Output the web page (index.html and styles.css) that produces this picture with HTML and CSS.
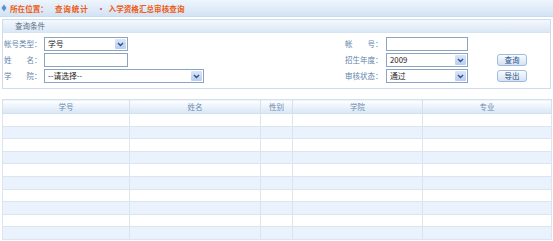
FILE: index.html
```html
<!DOCTYPE html>
<html>
<head>
<meta charset="utf-8">
<link rel="stylesheet" href="styles.css">
</head>
<body>
<div class="topbar">
  <svg class="pin" width="6" height="8" viewBox="0 0 6 8"><path d="M3 0.5 L5.5 4 L3 7.5 L0.5 4 Z" fill="#5b8fd0"/></svg>
  <span class="crumb">所在位置：</span>
  <span class="crumb sp">查询统计</span>
  <span class="dot">•</span>
  <span class="crumb">入学资格汇总审核查询</span>
</div>

<div class="panel">
  <div class="panel-head">查询条件</div>
  <div class="form">
    <div class="lbl r1 c1">帐号类型：</div>
    <div class="sel w84 r1 c2"><span>学号</span><i class="arr"><svg width="7" height="5" viewBox="0 0 7 5"><path d="M1 1 L3.5 3.5 L6 1" fill="none" stroke="#2f4f8f" stroke-width="1.4"/></svg></i></div>
    <div class="lbl r2 c1">姓　　名：</div>
    <div class="inp w84 r2 c2"></div>
    <div class="lbl r3 c1">学　　院：</div>
    <div class="sel w160 r3 c2"><span>--请选择--</span><i class="arr"><svg width="7" height="5" viewBox="0 0 7 5"><path d="M1 1 L3.5 3.5 L6 1" fill="none" stroke="#2f4f8f" stroke-width="1.4"/></svg></i></div>

    <div class="lbl r1 c4">帐　　号：</div>
    <div class="inp w82 r1 c5"></div>
    <div class="lbl r2 c4">招生年度：</div>
    <div class="sel w82 r2 c5"><span>2009</span><i class="arr"><svg width="7" height="5" viewBox="0 0 7 5"><path d="M1 1 L3.5 3.5 L6 1" fill="none" stroke="#2f4f8f" stroke-width="1.4"/></svg></i></div>
    <div class="lbl r3 c4">审核状态：</div>
    <div class="sel w82 r3 c5"><span>通过</span><i class="arr"><svg width="7" height="5" viewBox="0 0 7 5"><path d="M1 1 L3.5 3.5 L6 1" fill="none" stroke="#2f4f8f" stroke-width="1.4"/></svg></i></div>

    <div class="btn r2 c7">查询</div>
    <div class="btn r3 c7">导出</div>
  </div>
</div>

<table class="grid">
  <thead>
    <tr><th class="k1">学号</th><th class="k2">姓名</th><th class="k3">性别</th><th class="k4">学院</th><th class="k5">专业</th></tr>
  </thead>
  <tbody>
    <tr><td></td><td></td><td></td><td></td><td></td></tr>
    <tr class="alt"><td></td><td></td><td></td><td></td><td></td></tr>
    <tr><td></td><td></td><td></td><td></td><td></td></tr>
    <tr class="alt"><td></td><td></td><td></td><td></td><td></td></tr>
    <tr><td></td><td></td><td></td><td></td><td></td></tr>
    <tr class="alt"><td></td><td></td><td></td><td></td><td></td></tr>
    <tr><td></td><td></td><td></td><td></td><td></td></tr>
    <tr class="alt"><td></td><td></td><td></td><td></td><td></td></tr>
    <tr><td></td><td></td><td></td><td></td><td></td></tr>
    <tr class="alt"><td></td><td></td><td></td><td></td><td></td></tr>
  </tbody>
</table>
</body>
</html>
```

FILE: styles.css
```css
html, body {
  margin: 0;
  padding: 0;
  background: #ffffff;
  font-family: "Noto Sans CJK SC", "Noto Sans", sans-serif;
  font-size: 7.5px;
  overflow: hidden;
}

.topbar {
  height: 17px;
  display: flex;
  align-items: center;
  background: linear-gradient(#eef5fc, #d3e3f4);
  border-bottom: 1px solid #c9dbef;
  padding-left: 1px;
  box-sizing: border-box;
}
.pin { margin-right: 3px; }
.crumb {
  color: #ee5a12;
  font-weight: bold;
  font-size: 7.6px;
}
.crumb.sp { margin-left: 7px; letter-spacing: 0.8px; }
.dot {
  color: #e8407a;
  font-size: 9px;
  margin: 0 3px 0 8px;
}

.panel {
  margin: 2px 2px 0 2px;
  border: 1px solid #cddcee;
  height: 70px;
  box-sizing: border-box;
}
.panel-head {
  height: 12px;
  line-height: 12px;
  padding-left: 12px;
  color: #5c6f86;
  background: linear-gradient(#f4f8fd, #dbe7f5);
  border-bottom: 1px solid #d6e3f1;
}

.form {
  display: grid;
  grid-template-columns: 40px 160px 141px 41px 82px 29px 30px;
  grid-template-rows: 14px 14px 14px;
  row-gap: 2px;
  padding: 4px 0 0 1px;
}
.r1 { grid-row: 1; }
.r2 { grid-row: 2; }
.r3 { grid-row: 3; }
.c1 { grid-column: 1; }
.c2 { grid-column: 2; }
.c4 { grid-column: 4; }
.c5 { grid-column: 5; }
.c7 { grid-column: 7; }

.lbl {
  color: #6284ab;
  line-height: 14px;
  white-space: nowrap;
}

.inp, .sel {
  height: 14px;
  box-sizing: border-box;
  border: 1px solid #8aa4c2;
  background: #fff;
  position: relative;
}
.w84 { width: 84px; }
.w82 { width: 82px; }
.w160 { width: 160px; }

.sel span {
  display: block;
  padding-left: 3px;
  line-height: 12px;
  color: #1d1d1d;
  font-size: 7.8px;
}
.sel .arr {
  position: absolute;
  right: 1px;
  top: 1px;
  width: 11px;
  height: 10px;
  background: linear-gradient(#d9e6f8, #b8cdee);
  border-radius: 1px;
  display: flex;
  align-items: center;
  justify-content: center;
}

.btn {
  height: 12px;
  margin-top: 1px;
  box-sizing: border-box;
  border: 1px solid #9fbadb;
  border-radius: 3px;
  background: linear-gradient(#fafcff, #d3e2f4);
  color: #2a4e86;
  text-align: center;
  line-height: 10px;
}

.grid {
  margin: 10px 2px 0 2px;
  width: 549px;
  border-collapse: collapse;
  table-layout: fixed;
}
.grid th {
  height: 14px;
  padding: 0;
  font-weight: normal;
  color: #6b8bb0;
  background: linear-gradient(#ffffff, #d7e6f6);
  border: 1px solid #d3e0ee;
  text-align: center;
  box-sizing: border-box;
}
.k1 { width: 127px; }
.k2 { width: 131px; }
.k3 { width: 32px; }
.k4 { width: 130px; }
.k5 { width: 129px; }
.grid td {
  height: 12.6px;
  padding: 0;
  border: 1px solid #dbe5f0;
  box-sizing: border-box;
}
.grid tr.alt td { background: #eaf3fd; }
```
